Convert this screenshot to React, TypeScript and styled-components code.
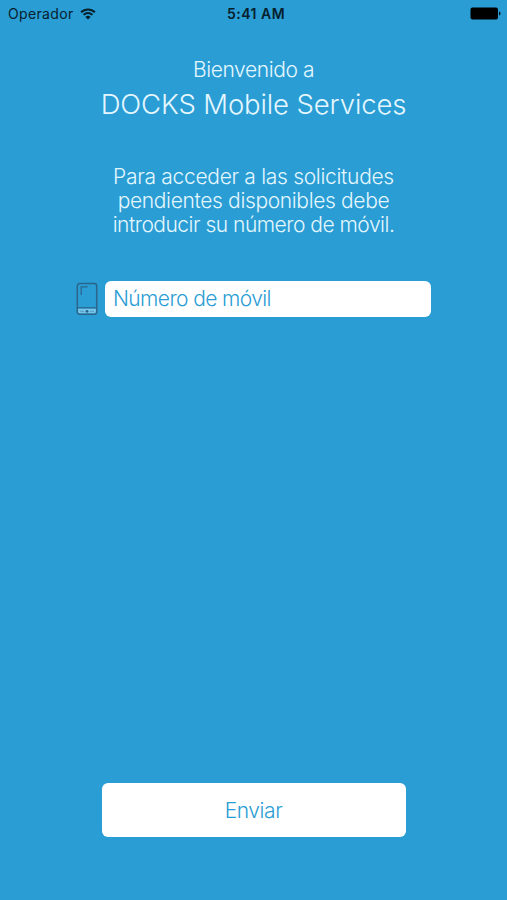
import styled, { createGlobalStyle } from "styled-components"

const GlobalStyle = createGlobalStyle`
  body{
    margin: 0;
    background: #2a9dd4;
  }
  *{
    box-sizing: border-box;
  }
`

const Screen = styled.main`
  display: flex;
  flex-direction: column;
  align-items: center;
  width: 507px;
  height: 900px;
  padding-bottom: 63px;
  background: #2a9dd4;
  font-family: Inter, "Liberation Sans", sans-serif;
  font-weight: 300;
  color: #e4f7ff;
`

const StatusBar = styled.header`
  display: grid;
  grid-template-columns: 1fr auto 1fr;
  align-items: center;
  width: 100%;
  height: 27px;
  padding: 0 6px 0 8px;
  font-size: 14px;
  font-weight: 400;
  color: #06202c;

  svg{
    display: block;
  }
`

const Carrier = styled.div`
  display: flex;
  align-items: center;
  gap: 6px;
  letter-spacing: 0.35px;
`

const Clock = styled.div`
  padding-left: 3px;
  font-weight: 600;
  letter-spacing: 0.5px;
`

const Battery = styled.div`
  justify-self: end;
`

const Welcome = styled.p`
  margin: 30px 0 0;
  font-size: 21px;
  line-height: 26px;
  letter-spacing: -0.4px;
`

const Title = styled.h1`
  margin: 4px 0 0;
  font-size: 27.5px;
  font-weight: 300;
  line-height: 34px;
  letter-spacing: -0.13px;
  white-space: nowrap;
`

const Hint = styled.p`
  margin: 44px 0 0;
  font-size: 21px;
  line-height: 24px;
  text-align: center;
  white-space: nowrap;
`

const HintLine = styled.span<{ $spacing: number }>`
  display: block;
  letter-spacing: ${({ $spacing }) => $spacing}px;
`

const PhoneRow = styled.label`
  display: flex;
  align-items: center;
  gap: 7px;
  margin-top: 44px;
`

const PhoneInput = styled.input`
  width: 326px;
  height: 36px;
  padding: 0 8px 1px;
  border: 0;
  border-radius: 6px;
  background: #fff;
  font: inherit;
  font-size: 21px;
  letter-spacing: -0.6px;
  color: #2a9dd4;

  &::placeholder{
    color: #2a9dd4;
    opacity: 1;
  }
`

const SendButton = styled.button`
  width: 304px;
  height: 54px;
  margin-top: auto;
  padding: 0;
  border: 0;
  border-radius: 6px;
  background: #fff;
  font: inherit;
  font-size: 21px;
  letter-spacing: -0.45px;
  color: #2a9dd4;
`

const WifiIcon = () => (
  <svg width="16" height="12" viewBox="0 0 16 12" fill="none" stroke="currentColor" strokeWidth="2">
    <path d="M1.1 4.3a9.8 9.8 0 0 1 13.8 0" />
    <path d="M3.6 6.9a6.2 6.2 0 0 1 8.8 0" />
    <path d="M8 11.6 5.4 9a3.7 3.7 0 0 1 5.2 0z" fill="currentColor" stroke="none" />
  </svg>
)

const BatteryIcon = () => (
  <svg width="31" height="13" viewBox="0 0 31 13">
    <rect x="0.5" y="0.5" width="27.5" height="12" rx="2" fill="#000" />
    <path d="M29 4.5c2 .5 2 3.5 0 4z" fill="#04141c" />
  </svg>
)

const PhoneIcon = () => (
  <svg width="22" height="34" viewBox="0 0 22 34" fill="none">
    <path d="M2 26.5h18V30a1.6 1.6 0 0 1-1.6 1.6H3.6A1.6 1.6 0 0 1 2 30z" fill="#75c5ed" />
    <rect x="1.3" y="1.6" width="19.4" height="30.6" rx="2.3" stroke="#2b658a" strokeWidth="1.5" />
    <path d="M1.5 25.8h19" stroke="#2b658a" strokeWidth="1.2" />
    <path d="M5.2 13V4.8h6.5" stroke="#2b658a" strokeWidth="1.2" />
    <path d="M4 29.3h4M14 29.3h4" stroke="#559cc2" />
    <circle cx="11" cy="29.3" r="1.4" fill="#24638a" />
  </svg>
)

const App = () => {
  return (
    <>
      <GlobalStyle />
      <Screen>
        <StatusBar>
          <Carrier>
            Operador
            <WifiIcon />
          </Carrier>
          <Clock>5:41 AM</Clock>
          <Battery>
            <BatteryIcon />
          </Battery>
        </StatusBar>
        <Welcome>Bienvenido a</Welcome>
        <Title>DOCKS Mobile Services</Title>
        <Hint>
          <HintLine $spacing={-0.3}>Para acceder a las solicitudes</HintLine>
          <HintLine $spacing={-0.35}>pendientes disponibles debe</HintLine>
          <HintLine $spacing={-0.5}>introducir su número de móvil.</HintLine>
        </Hint>
        <PhoneRow>
          <PhoneIcon />
          <PhoneInput type="tel" placeholder="Número de móvil" />
        </PhoneRow>
        <SendButton type="button">Enviar</SendButton>
      </Screen>
    </>
  )
}

export default App
